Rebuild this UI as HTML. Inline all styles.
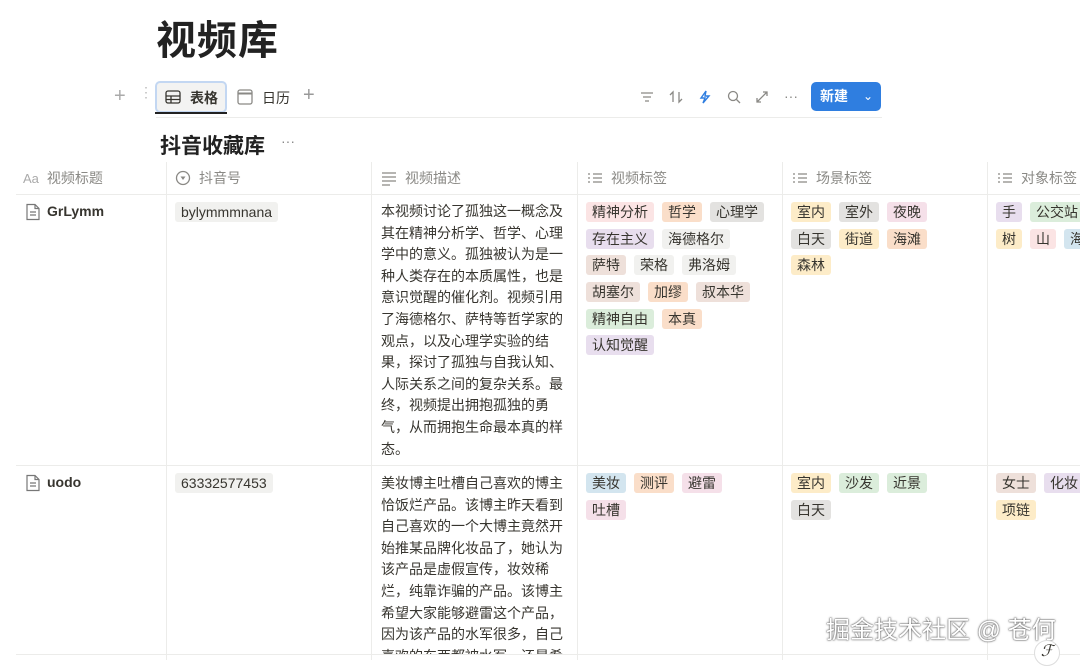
<!DOCTYPE html>
<html><head><meta charset="utf-8"><style>
*{margin:0;padding:0;box-sizing:border-box}
body{width:1080px;height:660px;overflow:hidden;background:#fff;font-family:"Liberation Sans","Noto Sans CJK SC",sans-serif;color:#37352f;position:relative}
.a{position:absolute}
h1{position:absolute;left:156px;top:8px;font-size:40px;font-weight:700;color:#222;letter-spacing:1px}
.vline{position:absolute;width:1px;background:#ececea}
.hline{position:absolute;height:1px;background:#ececea}
.hd{position:absolute;top:168px;font-size:14px;color:#8a8985;display:flex;align-items:center;gap:8px}
.desc{position:absolute;left:381px;width:192px;font-size:14px;line-height:21.6px;color:#37352f}
.tags{position:absolute;display:flex;flex-wrap:wrap;gap:6.7px 8px;width:190px}
.t{font-size:14px;line-height:20px;height:20px;padding:0 6px;border-radius:3px;white-space:nowrap}
.r{background:#fbe4e4}.o{background:#fadec9}.g{background:#e3e2e0}.p{background:#e8deee}.l{background:#f1f1ef}.b{background:#eee0da}.gr{background:#dbeddb}.y{background:#fdecc8}.pk{background:#f5e0e9}.bl{background:#d3e5ef}
.ic{stroke:#8a8985;fill:none;stroke-width:1.3}
</style></head><body>
<h1>视频库</h1>
<div class="a" style="left:114px;top:86px;font-size:20px;color:#aaa;line-height:20px">+</div>
<div class="a" style="left:139px;top:89px;font-size:14px;color:#bbb;letter-spacing:-2px;line-height:7px">⋮⋮</div>
<div class="a" style="left:155px;top:81px;width:72px;height:32px;border:2px solid #c3d7f2;border-radius:5px;background:#f3f3f2"></div>
<div class="a" style="left:155px;top:112px;width:72px;height:2px;background:#222"></div>
<svg class="a" style="left:164px;top:89px" width="18" height="16"><rect class="ic" x="2" y="2" width="14" height="12" rx="2" style="stroke:#37352f"/><path class="ic" d="M2 7H16M2 10.5H16M7 7V14" style="stroke:#37352f"/></svg>
<div class="a" style="left:190px;top:88px;font-size:14px;font-weight:700;color:#37352f">表格</div>
<svg class="a" style="left:236px;top:88px" width="18" height="18"><rect class="ic" x="2" y="2" width="14" height="14" rx="2"/><path d="M2 5.5H16" stroke="#8a8985" stroke-width="2"/></svg>
<div class="a" style="left:262px;top:88px;font-size:14px;color:#37352f">日历</div>
<div class="a" style="left:303px;top:85px;font-size:20px;color:#999;line-height:20px">+</div>
<svg class="a" style="left:638px;top:89px" width="140" height="16">
<path class="ic" d="M3 4H15M5 8H13M7 12H11"/>
<path class="ic" d="M35 13V3L32 6M41 3V13L44 10"/>
<path d="M68 2L63 9H67L65 14L71 7H67Z" fill="none" stroke="#2f7ee0" stroke-width="1.4"/>
<circle class="ic" cx="95" cy="7" r="4.5"/><path class="ic" d="M98.5 10.5L102 14"/>
<path class="ic" d="M119 13L129 3M125 3H129V7M119 9V13H123"/>
</svg>
<div class="a" style="left:784px;top:88px;font-size:14px;color:#8a8985">···</div>
<div class="a" style="left:811px;top:82px;width:70px;height:29px;background:#2f7ee0;border-radius:5px;color:#fff;font-size:14px;font-weight:700;line-height:29px;padding-left:9px">新建<span style="position:absolute;left:52px;top:0;font-weight:400;font-size:12px">⌄</span></div>
<div class="hline" style="left:156px;top:117px;width:726px"></div>
<div class="a" style="left:160px;top:130px;font-size:21px;font-weight:700;color:#222">抖音收藏库</div>
<div class="a" style="left:281px;top:133px;font-size:14px;color:#888">···</div>
<div class="hd" style="left:23px"><span style="font-size:13px;color:#aaa">Aa</span>视频标题</div>
<div class="hd" style="left:175px"><svg width="16" height="16"><circle class="ic" cx="8" cy="8" r="6.5"/><path d="M5.5 6.5H10.5L8 10Z" fill="#8a8985"/></svg>抖音号</div>
<div class="hd" style="left:381px"><svg width="16" height="16"><path class="ic" d="M1 3H15M1 7H15M1 11H15M1 15H9"/></svg>视频描述</div>
<div class="hd" style="left:587px"><svg width="16" height="16"><path class="ic" d="M1 4H3M1 8H3M1 12H3M6 4H15M6 8H15M6 12H15"/></svg>视频标签</div>
<div class="hd" style="left:792px"><svg width="16" height="16"><path class="ic" d="M1 4H3M1 8H3M1 12H3M6 4H15M6 8H15M6 12H15"/></svg>场景标签</div>
<div class="hd" style="left:997px"><svg width="16" height="16"><path class="ic" d="M1 4H3M1 8H3M1 12H3M6 4H15M6 8H15M6 12H15"/></svg>对象标签</div>
<div class="hline" style="left:16px;top:194px;width:1064px"></div>
<div class="hline" style="left:16px;top:465px;width:1064px"></div>
<div class="hline" style="left:16px;top:654px;width:1064px"></div>
<div class="vline" style="left:166px;top:162px;height:498px"></div>
<div class="vline" style="left:371px;top:162px;height:498px"></div>
<div class="vline" style="left:577px;top:162px;height:498px"></div>
<div class="vline" style="left:782px;top:162px;height:498px"></div>
<div class="vline" style="left:987px;top:162px;height:498px"></div>
<svg class="a" style="left:25px;top:203px" width="16" height="18"><path d="M2 1.5H10L14 5.5V16.5H2Z M10 1.5V5.5H14 M5 9H11M5 12H11" fill="none" stroke="#777" stroke-width="1.2"/></svg>
<div class="a" style="left:47px;top:203px;font-size:14px;font-weight:700;color:#37352f">GrLymm</div>
<div class="a" style="left:175px;top:202px;font-size:14px;background:#f1f1ef;border-radius:3px;padding:0 6px;line-height:20px">bylymmmnana</div>
<div class="desc" style="top:201px">本视频讨论了孤独这一概念及其在精神分析学、哲学、心理学中的意义。孤独被认为是一种人类存在的本质属性，也是意识觉醒的催化剂。视频引用了海德格尔、萨特等哲学家的观点，以及心理学实验的结果，探讨了孤独与自我认知、人际关系之间的复杂关系。最终，视频提出拥抱孤独的勇气，从而拥抱生命最本真的样态。</div>
<div class="tags" style="left:586px;top:202px;width:182px"><span class="t r">精神分析</span><span class="t o">哲学</span><span class="t g">心理学</span><span class="t p">存在主义</span><span class="t l">海德格尔</span><span class="t b">萨特</span><span class="t l">荣格</span><span class="t l">弗洛姆</span><span class="t b">胡塞尔</span><span class="t o">加缪</span><span class="t b">叔本华</span><span class="t gr">精神自由</span><span class="t o">本真</span><span class="t p">认知觉醒</span></div>
<div class="tags" style="left:791px;top:202px;width:150px"><span class="t y">室内</span><span class="t g">室外</span><span class="t pk">夜晚</span><span class="t g">白天</span><span class="t y">街道</span><span class="t o">海滩</span><span class="t y">森林</span></div>
<div class="tags" style="left:996px;top:202px;width:200px"><span class="t p">手</span><span class="t gr">公交站</span></div>
<div class="tags" style="left:996px;top:229px;width:200px"><span class="t y">树</span><span class="t r">山</span><span class="t bl">海</span></div>
<svg class="a" style="left:25px;top:474px" width="16" height="18"><path d="M2 1.5H10L14 5.5V16.5H2Z M10 1.5V5.5H14 M5 9H11M5 12H11" fill="none" stroke="#777" stroke-width="1.2"/></svg>
<div class="a" style="left:47px;top:474px;font-size:14px;font-weight:700;color:#37352f">uodo</div>
<div class="a" style="left:175px;top:473px;font-size:14px;background:#f1f1ef;border-radius:3px;padding:0 6px;line-height:20px">63332577453</div>
<div class="desc" style="top:473px;height:181px;overflow:hidden">美妆博主吐槽自己喜欢的博主恰饭烂产品。该博主昨天看到自己喜欢的一个大博主竟然开始推某品牌化妆品了，她认为该产品是虚假宣传，妆效稀烂，纯靠诈骗的产品。该博主希望大家能够避雷这个产品，因为该产品的水军很多，自己喜欢的东西都被水军，还是希望</div>
<div class="tags" style="left:586px;top:473px;width:182px"><span class="t bl">美妆</span><span class="t o">测评</span><span class="t pk">避雷</span><span class="t pk">吐槽</span></div>
<div class="tags" style="left:791px;top:473px;width:150px"><span class="t y">室内</span><span class="t gr">沙发</span><span class="t gr">近景</span><span class="t g">白天</span></div>
<div class="tags" style="left:996px;top:473px;width:200px"><span class="t b">女士</span><span class="t p">化妆</span></div>
<div class="tags" style="left:996px;top:500px"><span class="t y">项链</span></div>
<div class="a" style="left:826px;top:610px;font-size:24px;color:#fff;text-shadow:0 0 2px #555,0 0 1px #333;white-space:nowrap">掘金技术社区 @ 苍何</div>
<div class="a" style="left:1034px;top:640px;width:26px;height:26px;border-radius:50%;background:#fff;border:1px solid #ddd;font-size:16px;text-align:center;font-style:italic">ℱ</div>
</body></html>
